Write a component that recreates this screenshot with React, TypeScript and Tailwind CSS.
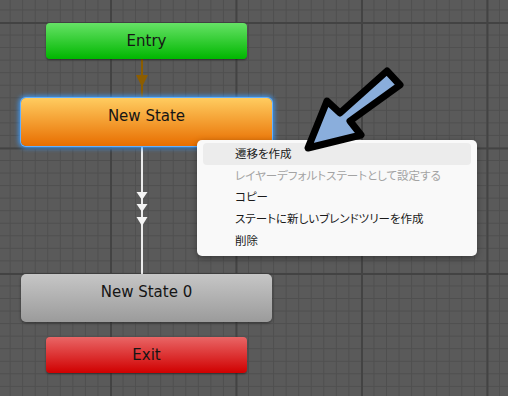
import React from "react";

const nodeText = "font-['DejaVu_Sans',sans-serif] text-[15px] leading-[18px] text-[#151515] text-center";

function MenuItem({ label, active, disabled }: { label: string; active?: boolean; disabled?: boolean }) {
  return (
    <div
      className={`h-[21.6px] flex items-center pl-[32px] rounded-[4px] text-[11.5px] ${
        active ? "bg-[#ececec]" : ""
      } ${disabled ? "text-[#a3a3a3]" : "text-[#1a1a1a]"}`}
    >
      {label}
    </div>
  );
}

export default function App() {
  return (
    <div className="relative w-[508px] h-[396px] overflow-hidden bg-[#5a5a5a] bg-[linear-gradient(to_right,#434343_2px,transparent_2px),linear-gradient(to_bottom,#434343_2px,transparent_2px),linear-gradient(to_right,#4f4f4f_1px,transparent_1px),linear-gradient(to_bottom,#4f4f4f_1px,transparent_1px)] bg-[length:125.5px_125.5px,125.5px_125.5px,12.55px_12.55px,12.55px_12.55px] bg-[position:110px_22px]">
      {/* connections */}
      <svg className="absolute left-0 top-0" width="508" height="396" viewBox="0 0 508 396">
        <line x1="142" y1="59" x2="142" y2="98" stroke="#8c5d00" strokeWidth="2" />
        <polygon points="136,75 148,75 142,87" fill="#8c5d00" />
        <line x1="142" y1="147" x2="142" y2="274" stroke="#ececec" strokeWidth="2" />
        <polygon points="136.5,192 147.5,192 142,200" fill="#f4f4f4" />
        <polygon points="136.5,204 147.5,204 142,212" fill="#f4f4f4" />
        <polygon points="136.5,217 147.5,217 142,226" fill="#f4f4f4" />
      </svg>

      {/* Entry */}
      <div className={`absolute left-[46px] top-[23px] w-[201px] h-[36px] rounded-[4px] bg-[linear-gradient(to_bottom,#66e266,#00b700)] shadow-[0_1px_2px_rgba(0,0,0,0.45)] flex items-center justify-center ${nodeText}`}>
        Entry
      </div>

      {/* New State (selected) */}
      <div className={`absolute left-[21px] top-[98px] w-[251px] h-[48px] rounded-[5px] bg-[linear-gradient(to_bottom,#ffcc60,#e86e00)] shadow-[0_0_0_1px_#62b0ff,0_0_5px_2px_#3a9cff] pt-[9px] ${nodeText}`}>
        New State
      </div>

      {/* New State 0 */}
      <div className={`absolute left-[21px] top-[274px] w-[251px] h-[48px] rounded-[5px] bg-[linear-gradient(to_bottom,#c6c6c6,#9b9b9b)] shadow-[0_1px_3px_rgba(0,0,0,0.45)] pt-[9px] ${nodeText}`}>
        New State 0
      </div>

      {/* Exit */}
      <div className={`absolute left-[46px] top-[337px] w-[201px] h-[36px] rounded-[4px] bg-[linear-gradient(to_bottom,#e96666,#d00000)] shadow-[0_1px_2px_rgba(0,0,0,0.45)] flex items-center justify-center ${nodeText}`}>
        Exit
      </div>

      {/* Context menu */}
      <div className="absolute left-[197px] top-[140px] w-[280px] rounded-[5px] bg-[#f9f9f9] shadow-[0_2px_6px_rgba(0,0,0,0.35)] px-[6px] pt-[3px] pb-[5px] font-['Noto_Sans_CJK_JP',sans-serif] [font-feature-settings:'palt']">
        <MenuItem label="遷移を作成" active />
        <MenuItem label="レイヤーデフォルトステートとして設定する" disabled />
        <MenuItem label="コピー" />
        <MenuItem label="ステートに新しいブレンドツリーを作成" />
        <MenuItem label="削除" />
      </div>

      {/* Annotation arrow */}
      <svg className="absolute left-0 top-0" width="508" height="396" viewBox="0 0 508 396">
        <polygon
          points="387,71 400,85 350,121 361,135 308,148 327,101 340,113"
          fill="#8aaedc"
          stroke="#000"
          strokeWidth="7"
          strokeLinejoin="round"
        />
      </svg>
    </div>
  );
}
